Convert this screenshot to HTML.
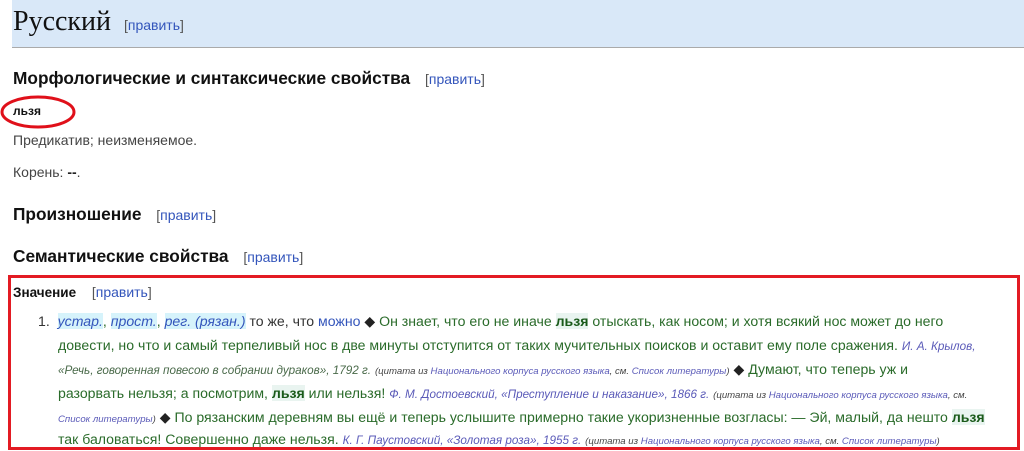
<!DOCTYPE html>
<html><head><meta charset="utf-8"><style>
body{margin:0;width:1024px;height:451px;background:#fff;position:relative;overflow:hidden;font-family:"Liberation Sans",Arial,sans-serif;color:#222}
.a{position:absolute;white-space:nowrap}
.e{color:#3355bb;font-weight:normal;font-size:14px}
.br{color:#555}
h2{margin:0;font-size:17.3px;font-weight:bold;color:#111}
.g{color:#2a6b2a;font-size:14.1px}
.c{color:#5a5ab8;font-style:italic;font-size:11.7px}
.s{color:#5a5ab8;font-size:9.6px;font-style:italic}
.s b{font-weight:normal;color:#444}
.k{background:#e9f4f0;font-weight:bold;color:#1a5a1a}
.l{color:#3355bb;font-style:italic;background:#d6f3fb}
</style></head><body>
<div class="a" style="left:12px;top:0;width:1012px;height:47px;background:#d9e8f8;border-bottom:1px solid #aaa"></div>
<div class="a" style="left:13px;top:6px;font-family:'Liberation Serif',serif;font-size:28px;color:#111">Русский <span class="e" style="font-family:'Liberation Sans',sans-serif;margin-left:6px"><span class="br">[</span>править<span class="br">]</span></span></div>
<div class="a" style="left:13px;top:68px"><h2>Морфологические и синтаксические свойства <span class="e" style="margin-left:10px"><span class="br">[</span>править<span class="br">]</span></span></h2></div>
<div class="a" style="left:13px;top:104px;font-size:12px;font-weight:bold;color:#111">льзя</div>
<svg class="a" style="left:0;top:94px" width="82" height="38"><ellipse cx="38" cy="18" rx="36" ry="15" fill="none" stroke="#e0101a" stroke-width="3"/></svg>
<div class="a" style="left:13px;top:132px;font-size:14px;color:#444">Предикатив; неизменяемое.</div>
<div class="a" style="left:13px;top:164px;font-size:14px;color:#444">Корень: <b style="color:#222">--</b>.</div>
<div class="a" style="left:13px;top:204px"><h2>Произношение <span class="e" style="margin-left:10px"><span class="br">[</span>править<span class="br">]</span></span></h2></div>
<div class="a" style="left:13px;top:246px"><h2>Семантические свойства <span class="e" style="margin-left:10px"><span class="br">[</span>править<span class="br">]</span></span></h2></div>
<div class="a" style="left:8px;top:275px;width:1006px;height:169px;border:3px solid #e31b23"></div>
<div class="a" style="left:13px;top:284px;font-size:13.5px;font-weight:bold;color:#111">Значение <span class="e" style="margin-left:12px"><span class="br">[</span>править<span class="br">]</span></span></div>
<div class="a g" style="left:38px;top:313px"><span style="color:#333">1.</span>&nbsp; <span class="l">устар.</span>, <span class="l">прост.</span>, <span class="l">рег. (рязан.)</span> <span style="color:#333">то же, что</span> <span style="color:#3355bb">можно</span> <span style="color:#222">◆</span> Он знает, что его не иначе <span class="k">льзя</span> отыскать, как носом; и хотя всякий нос может до него</div>
<div class="a g" style="left:58px;top:337px">довести, но что и самый терпеливый нос в две минуты отступится от таких мучительных поисков и оставит ему поле сражения. <span class="c">И. А. Крылов,</span></div>
<div class="a g" style="left:58px;top:361px"><span class="c" style="color:#4a6a4a">«Речь, говоренная повесою в собрании дураков», 1792 г.</span> <span class="s"><b>(цитата из</b> Национального корпуса русского языка<b>, см.</b> Список литературы<b>)</b></span> <span style="color:#222">◆</span> Думают, что теперь уж и</div>
<div class="a g" style="left:58px;top:385px">разорвать нельзя; а посмотрим, <span class="k">льзя</span> или нельзя! <span class="c">Ф. М. Достоевский, «Преступление и наказание», 1866 г.</span> <span class="s"><b>(цитата из</b> Национального корпуса русского языка<b>, см.</b></span></div>
<div class="a g" style="left:58px;top:409px"><span class="s">Список литературы<b>)</b></span> <span style="color:#222">◆</span> По рязанским деревням вы ещё и теперь услышите примерно такие укоризненные возгласы: — Эй, малый, да нешто <span class="k">льзя</span></div>
<div class="a g" style="left:58px;top:431px">так баловаться! Совершенно даже нельзя. <span class="c">К. Г. Паустовский, «Золотая роза», 1955 г.</span> <span class="s"><b>(цитата из</b> Национального корпуса русского языка<b>, см.</b> Список литературы<b>)</b></span></div>
</body></html>
